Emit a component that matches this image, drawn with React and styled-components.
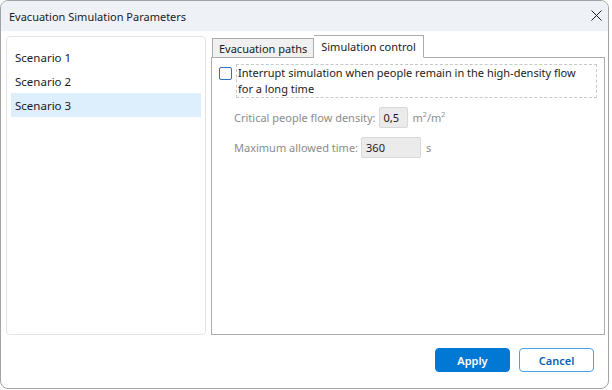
import React from 'react';
import styled, { createGlobalStyle } from 'styled-components';

const Global = createGlobalStyle`
  html, body {
    margin: 0;
    padding: 0;
    background: #ffffff;
  }
  body {
    font-family: "Noto Sans", "Open Sans", sans-serif;
    font-size: 11px;
    color: #1b1b1b;
  }
`;

const Window = styled.div`
  width: 607px;
  height: 387px;
  border: 1px solid #a3a3a3;
  border-radius: 8px;
  overflow: hidden;
  display: flex;
  flex-direction: column;
  background: #ffffff;
`;

const TitleBar = styled.div`
  height: 30px;
  flex: none;
  display: flex;
  align-items: center;
  justify-content: space-between;
  padding: 0 6px 0 8px;
  background: #eef2f7;
`;

const Title = styled.span`
  font-size: 11px;
  color: #1a1a1a;
`;

const CloseButton = styled.svg`
  width: 11px;
  height: 11px;
  margin-top: -2px;
`;

const Main = styled.div`
  display: flex;
  gap: 5px;
  padding: 5px 3px 0 5px;
  height: 299px;
`;

const List = styled.div`
  width: 190px;
  height: 289px;
  flex: none;
  border: 1px solid #e3e3e3;
  border-radius: 4px;
  padding: 8px 4px 0 4px;
  display: flex;
  flex-direction: column;
`;

const Item = styled.div`
  height: 24px;
  display: flex;
  align-items: center;
  padding-left: 4px;
  font-size: 11.5px;
  background: ${p => (p.selected ? '#ddeefc' : 'transparent')};
`;

const Tabs = styled.div`
  flex: 1;
  display: flex;
  flex-direction: column;
`;

const TabStrip = styled.div`
  display: flex;
  align-items: flex-end;
  padding-left: 1px;
  height: 21px;
  position: relative;
  z-index: 1;
`;

const Tab = styled.div`
  height: ${p => (p.active ? '21px' : '18px')};
  padding: 0 ${p => (p.active ? '7px' : '6px')};
  display: flex;
  align-items: center;
  border: 1px solid #acacac;
  border-bottom: ${p => (p.active ? '1px solid #ffffff' : '1px solid #acacac')};
  border-left: ${p => (p.active ? 'none' : '1px solid #acacac')};
  background: ${p => (p.active ? '#ffffff' : '#f0f0f0')};
  margin-bottom: -1px;
  color: #1a1a1a;
`;

const Panel = styled.div`
  flex: 1;
  border: 1px solid #acacac;
  padding: 6px 7px;
`;

const CheckRow = styled.label`
  display: flex;
  align-items: flex-start;
  gap: 4px;
`;

const Box = styled.span`
  width: 11px;
  height: 11px;
  flex: none;
  margin-top: 3px;
  border: 1px solid #2a72c4;
  border-radius: 2px;
  background: #ffffff;
`;

const Focus = styled.span`
  flex: 1;
  border: 1px dashed #c8c8c8;
  padding: 0 0 0 1px;
  line-height: 16px;
`;

const Field = styled.div`
  display: flex;
  align-items: center;
  gap: 3px;
  margin-left: 15px;
  margin-top: ${p => p.top}px;
  color: #8c8c8c;
`;

const Input = styled.div`
  width: ${p => p.w}px;
  height: 21px;
  box-sizing: border-box;
  border: 1px solid #d8d8d8;
  border-radius: 2px;
  background: #ebebeb;
  color: #1a1a1a;
  display: flex;
  align-items: center;
  padding-left: 4px;
`;

const Unit = styled.span`
  margin-left: 2px;
  color: #8c8c8c;
`;

const Sup = styled.sup`
  font-size: 7px;
`;

const Footer = styled.div`
  flex: 1;
  display: flex;
  justify-content: flex-end;
  align-items: flex-start;
  gap: 9px;
  padding: 13px 14px 0 0;
`;

const Button = styled.button`
  width: 75px;
  height: 24px;
  border-radius: 4px;
  font-family: inherit;
  font-size: 11px;
  font-weight: 600;
  border: 1px solid ${p => (p.primary ? '#0078d4' : '#4aa0eb')};
  background: ${p => (p.primary ? '#0078d4' : '#ffffff')};
  color: ${p => (p.primary ? '#ffffff' : '#0a63b8')};
  padding: 0;
`;

export default function App() {
  return (
    <>
      <Global />
      <Window>
        <TitleBar>
          <Title>Evacuation Simulation Parameters</Title>
          <CloseButton viewBox="0 0 11 11">
            <path d="M0.5 0.5 L10.5 10.5 M10.5 0.5 L0.5 10.5" stroke="#1a1a1a" strokeWidth="1" />
          </CloseButton>
        </TitleBar>
        <Main>
          <List>
            <Item>Scenario 1</Item>
            <Item>Scenario 2</Item>
            <Item selected>Scenario 3</Item>
          </List>
          <Tabs>
            <TabStrip>
              <Tab>Evacuation paths</Tab>
              <Tab active>Simulation control</Tab>
            </TabStrip>
            <Panel>
              <CheckRow>
                <Box />
                <Focus>
                  Interrupt simulation when people remain in the high-density flow
                  <br />
                  for a long time
                </Focus>
              </CheckRow>
              <Field top={9}>
                Critical people flow density:
                <Input w={29}>0,5</Input>
                <Unit>
                  m<Sup>2</Sup>/m<Sup>2</Sup>
                </Unit>
              </Field>
              <Field top={9}>
                Maximum allowed time:
                <Input w={60}>360</Input>
                <Unit>s</Unit>
              </Field>
            </Panel>
          </Tabs>
        </Main>
        <Footer>
          <Button primary>Apply</Button>
          <Button>Cancel</Button>
        </Footer>
      </Window>
    </>
  );
}
